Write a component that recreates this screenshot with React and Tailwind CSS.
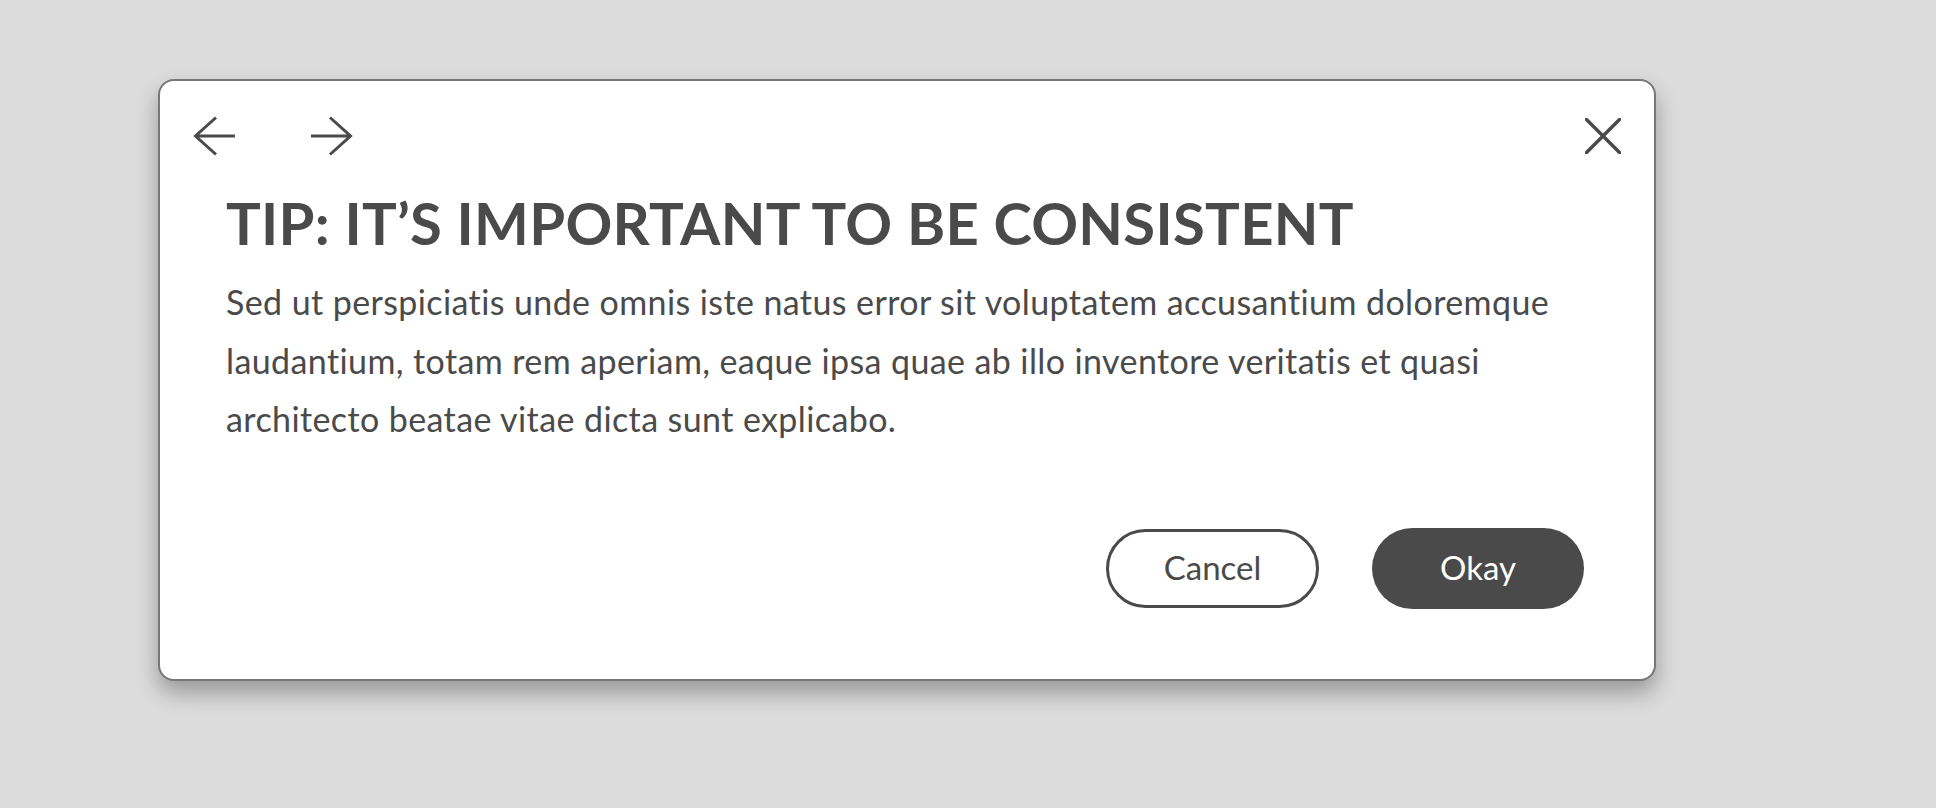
import React from "react";

function BackArrow() {
  return (
    <svg width="42" height="40" viewBox="0 0 42 40" fill="none">
      <path d="M23 1.5 L2.5 20 L23 38.5 M2.5 20 H42" stroke="#4a4a4a" strokeWidth="3" strokeLinecap="butt" strokeLinejoin="miter" />
    </svg>
  );
}

function ForwardArrow() {
  return (
    <svg width="42" height="40" viewBox="0 0 42 40" fill="none">
      <path d="M19 1.5 L39.5 20 L19 38.5 M39.5 20 H0" stroke="#4a4a4a" strokeWidth="3" strokeLinecap="butt" strokeLinejoin="miter" />
    </svg>
  );
}

function CloseIcon() {
  return (
    <svg width="36" height="36" viewBox="0 0 36 36" fill="none">
      <path d="M1.5 1.5 L34.5 34.5 M34.5 1.5 L1.5 34.5" stroke="#4a4a4a" strokeWidth="3.5" strokeLinecap="round" />
    </svg>
  );
}

export default function App() {
  return (
    <div className="w-full h-[808px] bg-[#dcdcdc] pt-[79px] pl-[158px] text-[#4a4a4a]" style={{ fontFamily: "Lato, 'Noto Sans', sans-serif" }}>
      <div className="w-[1498px] h-[602px] bg-white border-2 border-[#777777] rounded-[16px] shadow-[0_12px_22px_rgba(0,0,0,0.3)] flex flex-col">
        <div className="flex items-center justify-between pt-[35px] pl-[33px] pr-[33px] h-[75px]">
          <div className="flex items-center gap-[76px]">
            <BackArrow />
            <ForwardArrow />
          </div>
          <CloseIcon />
        </div>
        <div className="pl-[66px] pr-[40px]">
          <h1 className="mt-[38px] text-[58px] leading-[58px] font-bold tracking-[0.3px] whitespace-nowrap">
            TIP: IT’S IMPORTANT TO BE CONSISTENT
          </h1>
          <p className="mt-[21px] text-[34px] leading-[58.5px] tracking-[0.4px] whitespace-nowrap">
            Sed ut perspiciatis unde omnis iste natus error sit voluptatem accusantium doloremque
            <br />
            laudantium, totam rem aperiam, eaque ipsa quae ab illo inventore veritatis et quasi
            <br />
            architecto beatae vitae dicta sunt explicabo.
          </p>
        </div>
        <div className="mt-[79px] flex items-center justify-end gap-[53px] pr-[70px]">
          <button className="w-[213px] h-[79px] rounded-full border-[3px] border-[#4a4a4a] bg-white text-[33px] text-[#4a4a4a] flex items-center justify-center">
            Cancel
          </button>
          <button className="w-[212px] h-[81px] rounded-full bg-[#4a4a4a] text-[33px] text-white flex items-center justify-center">
            Okay
          </button>
        </div>
      </div>
    </div>
  );
}
